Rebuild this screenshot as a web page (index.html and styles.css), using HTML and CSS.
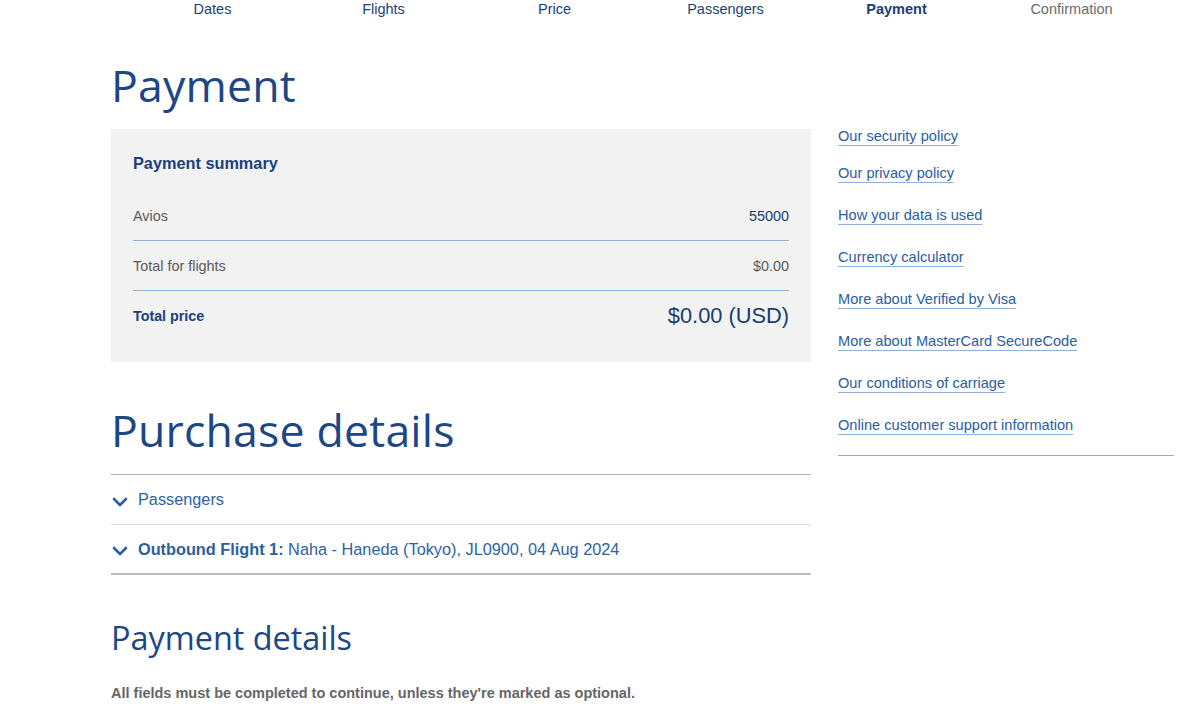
FILE: index.html
```html
<!DOCTYPE html>
<html lang="en">
<head>
<meta charset="utf-8">
<title>Payment</title>
<link rel="stylesheet" href="styles.css">
</head>
<body>
<nav class="steps">
  <span class="step">Dates</span>
  <span class="step">Flights</span>
  <span class="step">Price</span>
  <span class="step">Passengers</span>
  <span class="step current">Payment</span>
  <span class="step future">Confirmation</span>
</nav>

<div class="page">
  <h1 class="title">Payment</h1>
  <div class="layout">
    <main class="main">
      <section class="summary">
        <h2 class="summary-title">Payment summary</h2>
        <div class="summary-row">
          <span class="label">Avios</span>
          <span class="value navy">55000</span>
        </div>
        <div class="summary-row">
          <span class="label">Total for flights</span>
          <span class="value">$0.00</span>
        </div>
        <div class="summary-row total">
          <span class="label">Total price</span>
          <span class="value">$0.00 (USD)</span>
        </div>
      </section>

      <h2 class="section-title">Purchase details</h2>
      <div class="accordion">
        <div class="acc-item">
          <svg class="chev" width="16" height="10" viewBox="0 0 16 10"><path d="M2 2 L8 8 L14 2" fill="none" stroke="#2b5f9f" stroke-width="2.6" stroke-linecap="round" stroke-linejoin="round"/></svg>
          <span class="acc-text">Passengers</span>
        </div>
        <div class="acc-item last">
          <svg class="chev" width="16" height="10" viewBox="0 0 16 10"><path d="M2 2 L8 8 L14 2" fill="none" stroke="#2b5f9f" stroke-width="2.6" stroke-linecap="round" stroke-linejoin="round"/></svg>
          <span class="acc-text"><strong>Outbound Flight 1:</strong> Naha - Haneda (Tokyo), JL0900, 04 Aug 2024</span>
        </div>
      </div>

      <h2 class="sub-title">Payment details</h2>
      <p class="note">All fields must be completed to continue, unless they're marked as optional.</p>
    </main>

    <aside class="side">
      <ul class="links">
        <li><a href="#">Our security policy</a></li>
        <li><a href="#">Our privacy policy</a></li>
        <li><a href="#">How your data is used</a></li>
        <li><a href="#">Currency calculator</a></li>
        <li><a href="#">More about Verified by Visa</a></li>
        <li><a href="#">More about MasterCard SecureCode</a></li>
        <li><a href="#">Our conditions of carriage</a></li>
        <li><a href="#">Online customer support information</a></li>
      </ul>
      <div class="side-rule"></div>
    </aside>
  </div>
</div>
</body>
</html>
```

FILE: styles.css
```css
* { box-sizing: border-box; }

html, body {
  margin: 0;
  padding: 0;
  background: #ffffff;
}

body {
  font-family: "Liberation Sans", Arial, Helvetica, sans-serif;
  color: #555555;
}

.steps {
  display: grid;
  grid-template-columns: repeat(5, 171px) 179px;
  padding-left: 127px;
  height: 18px;
  font-size: 14.5px;
  line-height: 18px;
}

.step {
  text-align: center;
  color: #1d3f74;
}

.step.current {
  font-weight: bold;
  color: #1b3d76;
}

.step.future {
  color: #6b6b6b;
}

.page {
  padding-left: 111px;
}

.title {
  margin: 37px 0 14px;
  font-family: "Open Sans", "Noto Sans", sans-serif;
  font-weight: 400;
  font-size: 44.6px;
  line-height: 60px;
  letter-spacing: 0.2px;
  color: #1c4684;
}

.layout {
  display: flex;
  gap: 27px;
  align-items: flex-start;
}

.main {
  width: 700px;
}

.summary {
  background: #f2f2f2;
  padding: 24px 22px 21px;
}

.summary-title {
  margin: 0 0 19px;
  font-size: 16.3px;
  line-height: 20px;
  font-weight: bold;
  color: #1b3f7c;
}

.summary-row {
  display: flex;
  justify-content: space-between;
  align-items: center;
  height: 50px;
  font-size: 14.4px;
  border-bottom: 1px solid #8eb1d8;
}

.summary-row:first-of-type {
  height: 49px;
}

.summary-row.total {
  border-bottom: none;
}

.summary-row .label {
  color: #5a5a5a;
}

.summary-row .value {
  color: #5a5a5a;
}

.summary-row .value.navy {
  color: #1c3b6c;
}

.summary-row.total .label {
  font-weight: bold;
  color: #1b3f7c;
  font-size: 14.3px;
}

.summary-row.total .value {
  font-size: 21.8px;
  color: #1c3b6c;
}

.section-title {
  margin: 38px 0 14px;
  font-family: "Open Sans", "Noto Sans", sans-serif;
  font-weight: 400;
  font-size: 44.6px;
  line-height: 60px;
  letter-spacing: 0.2px;
  color: #1c4684;
}

.accordion {
  border-top: 1px solid #b0b0b0;
}

.acc-item {
  display: flex;
  align-items: center;
  gap: 10px;
  height: 50px;
  padding-left: 1px;
  border-bottom: 1px solid #dedede;
  font-size: 16.3px;
  color: #2c63a5;
}

.acc-item.last {
  border-bottom: 2px solid #bdbdbd;
}

.chev {
  flex: none;
  margin-top: 4px;
}

.acc-text strong {
  font-weight: bold;
  color: #2a5f9f;
}

.sub-title {
  margin: 40px 0 24px;
  font-family: "Open Sans", "Noto Sans", sans-serif;
  font-weight: 400;
  font-size: 32.4px;
  line-height: 44px;
  color: #1c4684;
}

.note {
  margin: 0;
  font-size: 14.5px;
  line-height: 20px;
  font-weight: bold;
  color: #666666;
}

.side {
  width: 336px;
}

.links {
  list-style: none;
  margin: 0;
  padding: 0;
  display: flex;
  flex-direction: column;
  gap: 28px;
}

.links li {
  line-height: 14px;
  font-size: 14.6px;
}

.links li:first-child {
  margin-bottom: -5px;
}

.links a {
  color: #2a5d9f;
  text-decoration: underline;
  text-decoration-color: #8fb2dc;
  text-underline-offset: 4px;
  text-decoration-thickness: 1px;
}

.side-rule {
  margin-top: 23px;
  border-top: 1px solid #a8a8a8;
}
```
